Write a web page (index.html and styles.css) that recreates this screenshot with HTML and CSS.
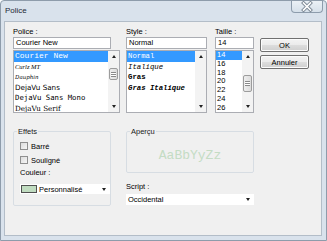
FILE: index.html
```html
<!DOCTYPE html>
<html lang="fr">
<head>
    <meta charset="UTF-8">
    <title>Police</title>
    <link rel="stylesheet" href="styles.css">
</head>
<body>
<div class="window">
    <div class="titlebar">
        <span class="title">Police</span>
        <div class="close">
            <svg width="32" height="13" viewBox="0 0 32 13">
                <path d="M12.5 3 L19.5 10 M19.5 3 L12.5 10" stroke="#7b8794" stroke-width="3.4" stroke-linecap="square"/>
                <path d="M12.5 3 L19.5 10 M19.5 3 L12.5 10" stroke="#fdfdfd" stroke-width="1.6" stroke-linecap="square"/>
            </svg>
        </div>
    </div>
    <div class="client">
        <div class="top">
            <div class="col col-font">
                <div class="lbl">Police :</div>
                <div class="edit edit-font">Courier New</div>
                <div class="list">
                    <ul class="items">
                        <li class="sel f-courier">Courier New</li>
                        <li class="f-curlz">Curlz MT</li>
                        <li class="f-dauphin">Dauphin</li>
                        <li class="f-djsans">DejaVu Sans</li>
                        <li class="f-djmono">DejaVu Sans Mono</li>
                        <li class="f-djserif">DejaVu Serif</li>
                    </ul>
                    <div class="vscroll">
                        <span class="arr"><i class="tri-up"></i></span>
                        <span class="track"><span class="thumb thumb-font"><b></b></span></span>
                        <span class="arr"><i class="tri-down"></i></span>
                    </div>
                </div>
            </div>
            <div class="col col-style">
                <div class="lbl">Style :</div>
                <div class="edit">Normal</div>
                <div class="list">
                    <ul class="items items-style">
                        <li class="sel">Normal</li>
                        <li class="it">Italique</li>
                        <li class="bd">Gras</li>
                        <li class="bd it">Gras Italique</li>
                    </ul>
                    <div class="vscroll">
                        <span class="arr"><i class="tri-up"></i></span>
                        <span class="track"></span>
                        <span class="arr"><i class="tri-down"></i></span>
                    </div>
                </div>
            </div>
            <div class="col col-size">
                <div class="lbl">Taille :</div>
                <div class="edit">14</div>
                <div class="list">
                    <ul class="items items-size">
                        <li class="sel">14</li>
                        <li>16</li>
                        <li>18</li>
                        <li>20</li>
                        <li>22</li>
                        <li>24</li>
                        <li>26</li>
                    </ul>
                    <div class="vscroll">
                        <span class="arr"><i class="tri-up"></i></span>
                        <span class="track"><span class="thumb thumb-size"><b></b></span></span>
                        <span class="arr"><i class="tri-down"></i></span>
                    </div>
                </div>
            </div>
            <div class="col col-btns">
                <button class="btn">OK</button>
                <button class="btn">Annuler</button>
            </div>
        </div>
        <div class="bottom">
            <fieldset class="grp grp-effets">
                <legend>Effets</legend>
                <div class="grp-body">
                    <div class="chk-row"><span class="chk"></span>Barré</div>
                    <div class="chk-row"><span class="chk"></span>Souligné</div>
                    <div class="lbl lbl-color">Couleur :</div>
                    <div class="combo combo-color">
                        <span class="swatch"></span>
                        <span class="combo-text">Personnalisé</span>
                        <i class="tri-down"></i>
                    </div>
                </div>
            </fieldset>
            <div class="col-right">
                <fieldset class="grp grp-apercu">
                    <legend>Aperçu</legend>
                    <div class="sample">AaBbYyZz</div>
                </fieldset>
                <div class="lbl lbl-script">Script :</div>
                <div class="combo combo-script">
                    <span class="combo-text">Occidental</span>
                    <i class="tri-down"></i>
                </div>
            </div>
        </div>
    </div>
</div>
</body>
</html>
```

FILE: styles.css
```css
*{margin:0; padding:0; list-style:none; box-sizing:border-box;}
body{font-family:"Liberation Sans", Arial, sans-serif; font-size:7.5px; color:#000; background:#fff;}

.window{width:327px; height:241px; background:#d9e2ec; border:1px solid #8e9cab; border-radius:4px 4px 0 0;
display:flex; flex-direction:column; overflow:hidden;}
.titlebar{height:20px; display:flex; align-items:flex-start; flex-shrink:0;}
.title{font-size:8px; line-height:19px; padding-left:4px; color:#1e2a36;}
.close{margin-left:auto; margin-right:3px; margin-top:-1px; width:32px; height:13px; border:1px solid #8d9cac;
border-top:0; border-radius:0 0 4px 4px; background:linear-gradient(#edf2f7, #d6e0ea);}
.close svg{display:block; margin-left:-1px;}

.client{flex:1; margin:0 4px 4px 3px; border:1px solid #b3bdc8; background:#f0f0f0;}

.top{display:flex; padding:5px 0 0 8px;}
.col-font{width:107px; margin-right:6px;}
.col-style{width:81px; margin-right:8px;}
.col-size{width:39px; margin-right:6px;}
.col-btns{width:49px; padding-top:11px;}

.lbl{height:10px; line-height:10px;}
.edit{height:12px; line-height:10px; border:1px solid #abadb3; background:#fff; padding-left:2px;}
.edit-font{width:98px;}

.list{margin-top:1px; height:63px; border:1px solid #abadb3; background:#fff; display:flex;}
.items{flex:1; overflow:hidden;}
.items li{height:10.6px; line-height:10.6px; padding-left:1px; white-space:nowrap;}
.items li.sel{background:#3399ff; color:#fff;}
.f-courier{font-family:"Liberation Mono", "Courier New", monospace; font-size:8px;}
.f-curlz{font-family:"Liberation Serif", serif; font-style:italic; font-size:6.5px;}
.f-dauphin{font-family:"DejaVu Serif", serif; font-size:5.5px; font-style:italic;}
.f-djsans{font-family:"DejaVu Sans", sans-serif; font-size:7.2px;}
.f-djmono{font-family:"DejaVu Sans Mono", monospace; font-size:7.3px;}
.f-djserif{font-family:"DejaVu Serif", serif; font-size:7.2px;}
.items-style li{font-family:"Liberation Mono", "Courier New", monospace; font-size:7.3px;}
.items-style li.it{font-style:italic;}
.items-style li.bd{font-weight:bold;}
.items-size li{height:8.8px; line-height:8.8px;}

.vscroll{width:11px; background:#f3f3f3; display:flex; flex-direction:column;}
.arr{height:11px; display:flex; align-items:center; justify-content:center;}
.track{flex:1;}
.thumb{display:flex; align-items:center; justify-content:center; margin:0 1px; border:1px solid #9c9c9c;
border-radius:2px; background:linear-gradient(90deg, #eeeeee, #dcdcdc);}
.thumb b{display:block; width:5px; height:5px; border-top:1px solid #8a8a8a; border-bottom:1px solid #8a8a8a;
background:linear-gradient(#fff 1.5px, #8a8a8a 1.5px, #8a8a8a 2.5px, #fff 2.5px);}
.thumb-font{margin-top:6px; height:12px;}
.thumb-size{margin-top:13px; height:17px;}
.tri-up{display:block; width:0; height:0; border-left:2.5px solid transparent; border-right:2.5px solid transparent;
border-bottom:3px solid #222;}
.tri-down{display:block; width:0; height:0; border-left:2.5px solid transparent; border-right:2.5px solid transparent;
border-top:3px solid #222;}

.btn{display:block; width:49px; height:14px; margin-bottom:3px; font-family:inherit; font-size:7.5px; color:#000;
border:1px solid #707070; border-radius:2px; background:linear-gradient(#f3f3f3 0%, #ebebeb 50%, #dddddd 51%, #cfcfcf 100%);
box-shadow:inset 0 0 0 1px #fcfcfc;}

.bottom{display:flex; align-items:flex-start; padding-left:8px; margin-top:14px;}
.grp{border:1px solid #d7dde3; border-radius:2px; padding:0;}
.grp legend{margin-left:3px; padding:0 1px; line-height:9px; font-size:7.5px; color:#1a1a1a;}
.grp-effets{width:98px; height:79px;}
.grp-body{padding-left:6px;}
.chk-row{display:flex; align-items:center; gap:3px; height:8px; margin-top:6px;}
.chk{width:8px; height:8px; border:1px solid #8f8f8f; background:linear-gradient(135deg, #dcdcdc, #f6f6f6);}
.lbl-color{margin-top:4px;}
.combo{display:flex; align-items:center; background:#fff; padding-right:4px;}
.combo-color{margin-top:6px; width:90px; height:10px; padding-left:1px;}
.swatch{width:16px; height:8px; border:1px solid #505050; background:#c0dcc0; margin-right:2px;}
.combo-text{flex:1;}
.combo-script{margin-top:2px; height:11px; padding-left:2px;}

.col-right{margin-left:15px; width:128px;}
.grp-apercu{height:46px;}
.sample{height:35px; padding-top:3px; display:flex; align-items:center; justify-content:center;
font-family:"Liberation Mono", "Courier New", monospace; font-size:13px; color:#c4dcc4;}
.lbl-script{margin-top:9px;}
```
